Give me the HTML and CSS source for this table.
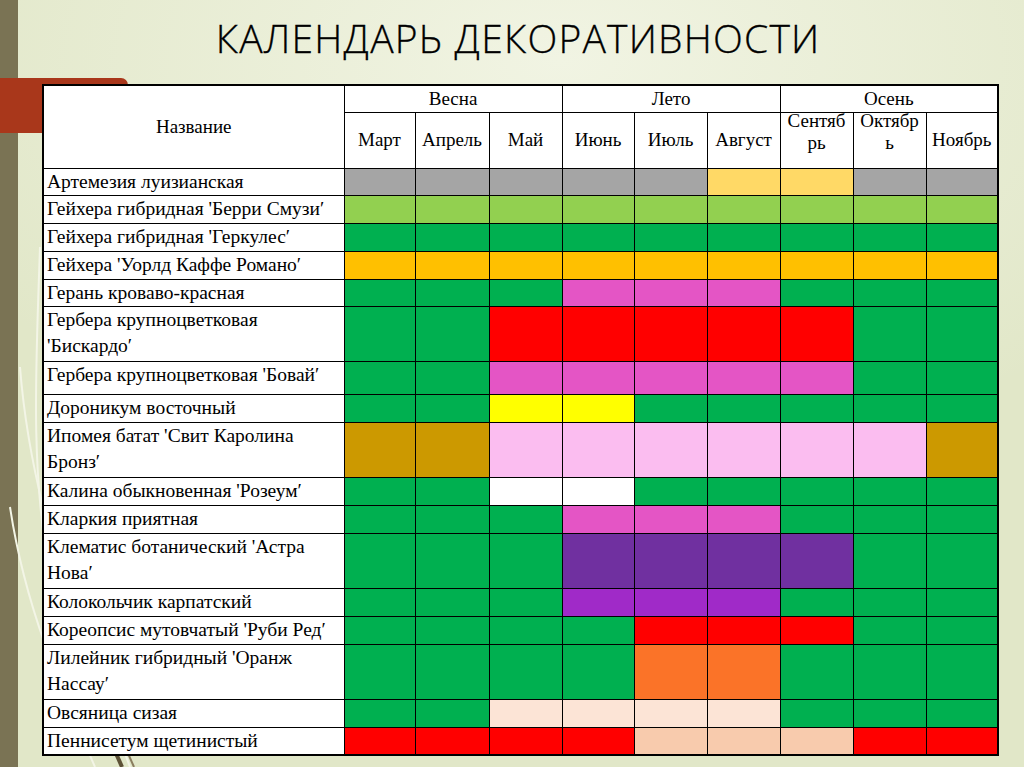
FILE: index.html
```html
<!DOCTYPE html>
<html lang="ru">
<head>
<meta charset="utf-8">
<title>Календарь декоративности</title>
<link rel="stylesheet" href="styles.css">
</head>
<body>
<div class="slide">
  <svg class="deco" width="200" height="520" viewBox="0 0 200 520" aria-hidden="true">
    <path d="M40 0 C 36 120, 30 220, 50 330" class="ln-light"/>
    <path d="M20 120 C 30 250, 70 360, 130 520" class="ln-light"/>
    <path d="M10 260 C 25 360, 60 440, 95 520" class="ln-light"/>
    <path d="M100 470 L 122 520" class="ln-dark"/>
    <path d="M112 470 L 134 520" class="ln-dark2"/>
  </svg>
  <h1 class="title">КАЛЕНДАРЬ ДЕКОРАТИВНОСТИ</h1>
  <table class="cal">
    <colgroup>
      <col class="c-name">
      <col class="c-m1"><col class="c-m2"><col class="c-m3">
      <col class="c-m4"><col class="c-m5"><col class="c-m6">
      <col class="c-m7"><col class="c-m8"><col class="c-m9">
    </colgroup>
    <thead>
      <tr class="h-season">
        <th rowspan="2" class="name-h">Название</th>
        <th colspan="3">Весна</th>
        <th colspan="3">Лето</th>
        <th colspan="3">Осень</th>
      </tr>
      <tr class="h-month">
        <th>Март</th><th>Апрель</th><th>Май</th>
        <th>Июнь</th><th>Июль</th><th>Август</th>
        <th class="wrap"><div class="wrap-in">Сентябрь</div></th>
        <th class="wrap"><div class="wrap-in">Октябрь</div></th>
        <th>Ноябрь</th>
      </tr>
    </thead>
    <tbody>
      <tr class="h27"><td class="nm">Артемезия луизианская</td><td class="gr"></td><td class="gr"></td><td class="gr"></td><td class="gr"></td><td class="gr"></td><td class="ylp"></td><td class="ylp"></td><td class="gr"></td><td class="gr"></td></tr>
      <tr class="h28"><td class="nm">Гейхера гибридная 'Берри Смузи′</td><td class="lg"></td><td class="lg"></td><td class="lg"></td><td class="lg"></td><td class="lg"></td><td class="lg"></td><td class="lg"></td><td class="lg"></td><td class="lg"></td></tr>
      <tr class="h28"><td class="nm">Гейхера гибридная 'Геркулес′</td><td class="g"></td><td class="g"></td><td class="g"></td><td class="g"></td><td class="g"></td><td class="g"></td><td class="g"></td><td class="g"></td><td class="g"></td></tr>
      <tr class="h28"><td class="nm">Гейхера 'Уорлд Каффе Романо′</td><td class="au"></td><td class="au"></td><td class="au"></td><td class="au"></td><td class="au"></td><td class="au"></td><td class="au"></td><td class="au"></td><td class="au"></td></tr>
      <tr class="h27"><td class="nm">Герань кроваво-красная</td><td class="g"></td><td class="g"></td><td class="g"></td><td class="pk"></td><td class="pk"></td><td class="pk"></td><td class="g"></td><td class="g"></td><td class="g"></td></tr>
      <tr class="h55"><td class="nm">Гербера крупноцветковая 'Бискардо′</td><td class="g"></td><td class="g"></td><td class="r"></td><td class="r"></td><td class="r"></td><td class="r"></td><td class="r"></td><td class="g"></td><td class="g"></td></tr>
      <tr class="h33"><td class="nm">Гербера крупноцветковая 'Бовай′</td><td class="g"></td><td class="g"></td><td class="pk"></td><td class="pk"></td><td class="pk"></td><td class="pk"></td><td class="pk"></td><td class="g"></td><td class="g"></td></tr>
      <tr class="h28"><td class="nm">Дороникум восточный</td><td class="g"></td><td class="g"></td><td class="y"></td><td class="y"></td><td class="g"></td><td class="g"></td><td class="g"></td><td class="g"></td><td class="g"></td></tr>
      <tr class="h55"><td class="nm">Ипомея батат 'Свит Каролина Бронз′</td><td class="br"></td><td class="br"></td><td class="lp"></td><td class="lp"></td><td class="lp"></td><td class="lp"></td><td class="lp"></td><td class="lp"></td><td class="br"></td></tr>
      <tr class="h28"><td class="nm">Калина обыкновенная 'Розеум′</td><td class="g"></td><td class="g"></td><td class="w"></td><td class="w"></td><td class="g"></td><td class="g"></td><td class="g"></td><td class="g"></td><td class="g"></td></tr>
      <tr class="h28"><td class="nm">Кларкия приятная</td><td class="g"></td><td class="g"></td><td class="g"></td><td class="pk"></td><td class="pk"></td><td class="pk"></td><td class="g"></td><td class="g"></td><td class="g"></td></tr>
      <tr class="h55"><td class="nm">Клематис ботанический 'Астра Нова′</td><td class="g"></td><td class="g"></td><td class="g"></td><td class="pu"></td><td class="pu"></td><td class="pu"></td><td class="pu"></td><td class="g"></td><td class="g"></td></tr>
      <tr class="h28"><td class="nm">Колокольчик карпатский</td><td class="g"></td><td class="g"></td><td class="g"></td><td class="vi"></td><td class="vi"></td><td class="vi"></td><td class="g"></td><td class="g"></td><td class="g"></td></tr>
      <tr class="h28"><td class="nm">Кореопсис мутовчатый 'Руби Ред′</td><td class="g"></td><td class="g"></td><td class="g"></td><td class="g"></td><td class="r"></td><td class="r"></td><td class="r"></td><td class="g"></td><td class="g"></td></tr>
      <tr class="h55"><td class="nm">Лилейник гибридный 'Оранж Нассау′</td><td class="g"></td><td class="g"></td><td class="g"></td><td class="g"></td><td class="or"></td><td class="or"></td><td class="g"></td><td class="g"></td><td class="g"></td></tr>
      <tr class="h28"><td class="nm">Овсяница сизая</td><td class="g"></td><td class="g"></td><td class="pl"></td><td class="pl"></td><td class="pl"></td><td class="pl"></td><td class="g"></td><td class="g"></td><td class="g"></td></tr>
      <tr class="h27"><td class="nm">Пеннисетум щетинистый</td><td class="r"></td><td class="r"></td><td class="r"></td><td class="r"></td><td class="pe"></td><td class="pe"></td><td class="pe"></td><td class="r"></td><td class="r"></td></tr>
    </tbody>
  </table>
</div>
</body>
</html>
```

FILE: styles.css
```css
html, body {
  margin: 0;
  padding: 0;
}

body {
  width: 1024px;
  height: 767px;
  overflow: hidden;
}

.slide {
  position: relative;
  width: 1024px;
  height: 767px;
  overflow: hidden;
  background:
    radial-gradient(ellipse 700px 420px at 560px 60px, #f1f4e3 0%, rgba(241,244,227,0) 100%),
    #e1e7c8;
}

.slide::before {
  content: "";
  position: absolute;
  left: 0;
  top: 0;
  width: 18px;
  height: 100%;
  background: #7a7354;
}

.slide::after {
  content: "";
  position: absolute;
  left: 0;
  top: 78px;
  width: 128px;
  height: 55px;
  background: #a9371b;
  border-top-right-radius: 7px;
}

.deco {
  position: absolute;
  left: 0;
  bottom: 0;
}

.ln-light {
  fill: none;
  stroke: #f3f5e6;
  stroke-width: 2;
}

.ln-dark {
  fill: none;
  stroke: #5d5236;
  stroke-width: 4;
}

.ln-dark2 {
  fill: none;
  stroke: #8a7e5f;
  stroke-width: 2;
}

.title {
  position: relative;
  z-index: 1;
  margin: 0;
  height: 74px;
  padding-left: 12px;
  line-height: 76px;
  text-align: center;
  font-family: "Open Sans", "Noto Sans", sans-serif;
  font-weight: 300;
  font-size: 39px;
  color: #000;
  letter-spacing: 1.2px;
  -webkit-text-stroke: 0.3px #000;
}

.cal {
  position: relative;
  z-index: 1;
  margin: 10px 0 0 42px;
  width: 955px;
  table-layout: fixed;
  border-collapse: collapse;
  border: 2px solid #000;
  font-family: "Liberation Serif", "Times New Roman", serif;
  color: #000;
  background: #fff;
}

.c-name { width: 301px; }
.c-m1 { width: 71px; }
.c-m2 { width: 74px; }
.c-m3 { width: 73px; }
.c-m4 { width: 72px; }
.c-m5 { width: 73px; }
.c-m6 { width: 73px; }
.c-m7 { width: 73px; }
.c-m8 { width: 73px; }
.c-m9 { width: 72px; }

.cal th,
.cal td {
  border: 1px solid #000;
  padding: 0 3px;
}

.cal th {
  font-weight: normal;
  font-size: 19px;
  text-align: center;
  vertical-align: middle;
  line-height: 22px;
}

.h-season { height: 27px; }
.h-month { height: 56px; }

.name-h {
  font-size: 18.5px;
}

.wrap {
  word-break: break-all;
  vertical-align: top !important;
}

.wrap-in {
  margin-top: -3px;
}

.cal td.nm {
  font-size: 19.5px;
  line-height: 26px;
  vertical-align: top;
  text-align: left;
  padding: 0 2px 0 3px;
  background: #fff;
}

.h27 { height: 27px; }
.h28 { height: 28px; }
.h33 { height: 33px; }
.h55 { height: 55px; }

.gr { background: #a5a5a5; }
.ylp { background: #ffd966; }
.lg { background: #92d050; }
.g { background: #00b050; }
.au { background: #ffc000; }
.pk { background: #e455c5; }
.r { background: #ff0000; }
.y { background: #ffff00; }
.br { background: #cc9900; }
.lp { background: #fbbdf0; }
.w { background: #ffffff; }
.pu { background: #7030a0; }
.vi { background: #a02ac8; }
.or { background: #fb7328; }
.pl { background: #fce4d6; }
.pe { background: #f8cbad; }
```
